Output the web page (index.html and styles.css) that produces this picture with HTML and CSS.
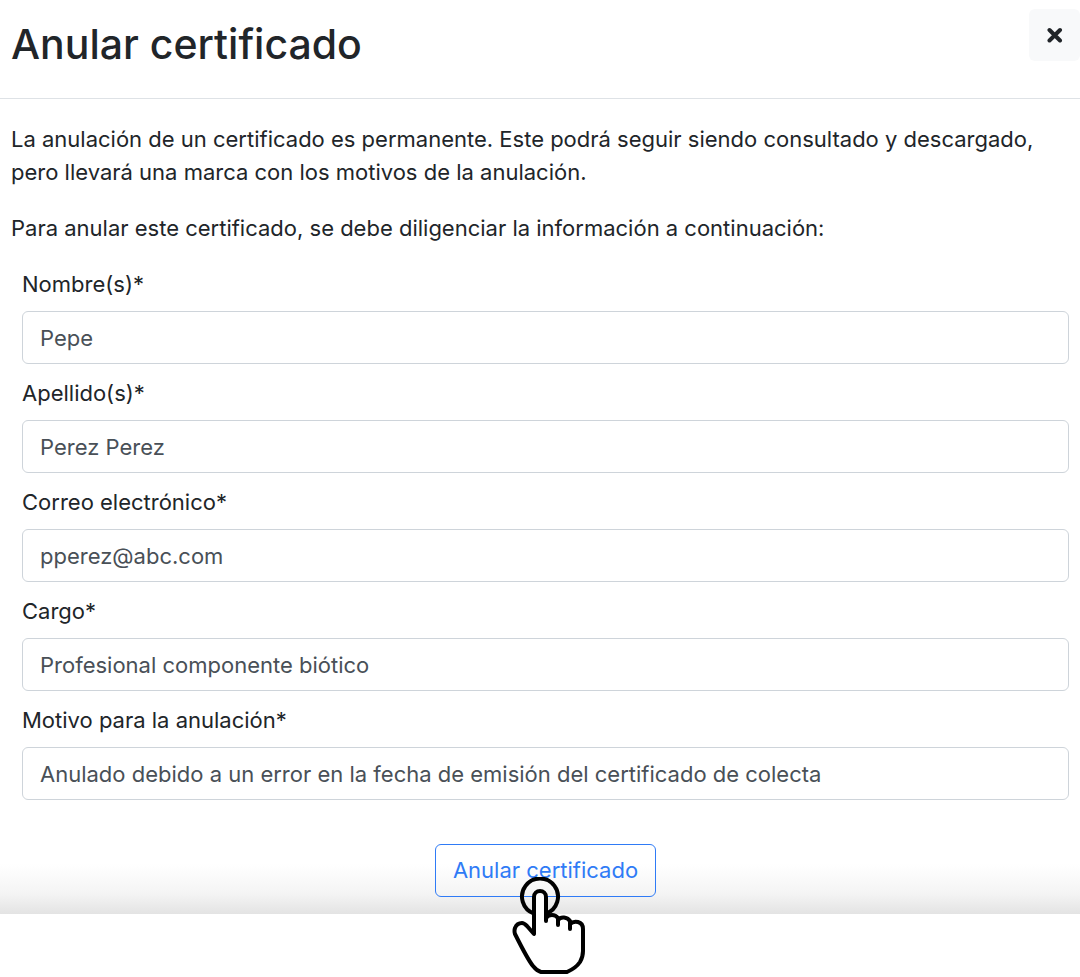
FILE: index.html
```html
<!DOCTYPE html>
<html lang="es">
<head>
<meta charset="utf-8">
<meta name="viewport" content="width=device-width, initial-scale=1">
<title>Anular certificado</title>
<link rel="stylesheet" href="styles.css">
</head>
<body>
<main class="dialog">
  <header class="dialog-header">
    <h1 class="dialog-title">Anular certificado</h1>
    <button class="close" type="button" aria-label="Cerrar">
      <svg class="close-icon" viewBox="0 0 16 16" aria-hidden="true"><path d="M2.500 3 13 13.500M13 3 2.500 13.500"/></svg>
    </button>
  </header>
  <div class="dialog-body">
    <p class="text">La anulación de un certificado es permanente. Este podrá seguir siendo consultado y descargado, pero llevará una marca con los motivos de la anulación.</p>
    <p class="text">Para anular este certificado, se debe diligenciar la información a continuación:</p>
    <form class="form">
      <div class="field">
        <label class="label" for="nombre">Nombre(s)*</label>
        <input class="input" id="nombre" type="text" value="Pepe">
      </div>
      <div class="field">
        <label class="label" for="apellido">Apellido(s)*</label>
        <input class="input" id="apellido" type="text" value="Perez Perez">
      </div>
      <div class="field">
        <label class="label" for="correo">Correo electrónico*</label>
        <input class="input" id="correo" type="email" value="pperez@abc.com">
      </div>
      <div class="field">
        <label class="label" for="cargo">Cargo*</label>
        <input class="input" id="cargo" type="text" value="Profesional componente biótico">
      </div>
      <div class="field">
        <label class="label" for="motivo">Motivo para la anulación*</label>
        <input class="input" id="motivo" type="text" value="Anulado debido a un error en la fecha de emisión del certificado de colecta">
      </div>
      <div class="actions">
        <button class="submit" type="button">Anular certificado</button>
        <svg class="pointer" viewBox="0 0 74 100" aria-hidden="true">
          <path class="hand" d="M22 57V20a6 6 0 0 1 12 0V44V41C37 37 43 37 46 41V48V43C49 39 55 40 58 44V52V47C62 43 71 44 71 52V74Q71 80 68 85Q64 91 55 95H29Q25 94 21 89Q16 83 3 57Q2 54 3 51Q5 46 10 46Q12 46 15 49Z"/>
          <path class="ring" d="M22 36.500A18 18 0 1 1 34 36.500"/>
        </svg>
      </div>
    </form>
  </div>
</main>
</body>
</html>
```
FILE: styles.css
```css
* { box-sizing: border-box; }

body {
  min-height: 100vh;
  margin: 0;
  background: #fff;
  color: #212529;
  font-family: Inter, "Liberation Sans", sans-serif;
  font-size: 22px;
  line-height: 33px;
}

.dialog {
  background: linear-gradient(to top, #e3e3e3, #f4f4f4 20px, #fff 50px);
}

.dialog-header {
  display: flex;
  justify-content: space-between;
  align-items: flex-start;
  padding: 9px 0 27px 11px;
  border-bottom: 1px solid #dee2e6;
}

.dialog-title {
  margin: 8px 0 0;
  font-size: 41px;
  font-weight: 500;
  line-height: 54px;
}

.close {
  display: flex;
  align-items: center;
  justify-content: center;
  width: 51px;
  height: 52px;
  padding: 0;
  border: 0;
  border-radius: 6px;
  background: #f8f9fa;
}

.close-icon {
  width: 16px;
  height: 16px;
  fill: none;
  stroke: #212529;
  stroke-width: 4;
  stroke-linecap: round;
}

.dialog-body { padding: 24px 11px 17px; }

.text { margin: 0 0 23px; }

.form {
  display: flex;
  flex-direction: column;
  gap: 13px;
  padding-left: 11px;
}

.field {
  display: flex;
  flex-direction: column;
  gap: 10px;
}

.input {
  width: 100%;
  height: 53px;
  padding: 0 17px;
  border: 1px solid #ced4da;
  border-radius: 6px;
  background: #fff;
  color: #495057;
  font: inherit;
}

.actions {
  position: relative;
  align-self: center;
  margin-top: 31px;
}

.submit {
  display: block;
  height: 53px;
  padding: 0 17px;
  border: 1px solid #2f7bf6;
  border-radius: 6px;
  background: transparent;
  color: #2f7bf6;
  font: inherit;
}

.pointer {
  position: absolute;
  top: 33px;
  left: 77px;
  width: 74px;
  height: 100px;
  stroke: #000;
  stroke-width: 4;
  stroke-linejoin: round;
  stroke-linecap: round;
}

.ring { fill: none; }

.hand { fill: #fff; }
```
